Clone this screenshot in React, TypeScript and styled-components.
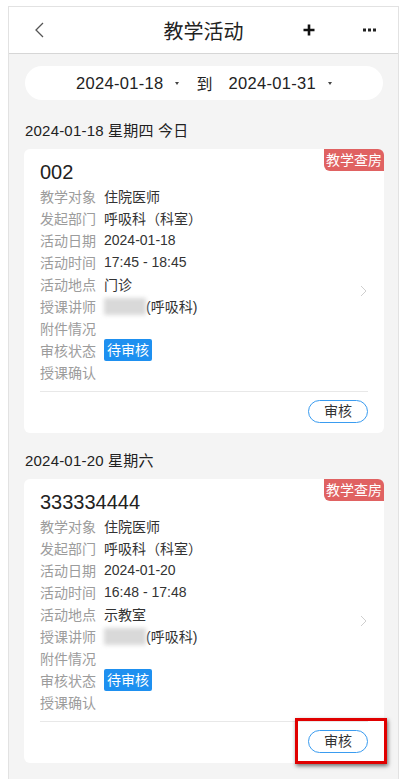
import React from 'react';
import styled, { createGlobalStyle } from 'styled-components';

const GlobalStyle = createGlobalStyle`
  html, body {
    background: #ffffff;
  }
  body {
    margin: 6px 2px 0 8px;
    font-family: "Liberation Sans", "Noto Sans CJK SC", sans-serif;
    color: #333333;
  }
`;

const Frame = styled.div`
  box-sizing: border-box;
  width: 391px;
  min-height: 773px;
  background: #f4f4f4;
  border: 1px solid #e2e2e2;
  border-bottom: none;
  box-shadow: -3px 0 6px rgba(0, 0, 0, 0.06);
`;

const NavBar = styled.div`
  height: 46px;
  background: #ffffff;
  border-bottom: 1px solid #d6d6d6;
  display: grid;
  grid-template-columns: 1fr auto 1fr;
  align-items: center;
`;

const NavTitle = styled.div`
  text-align: center;
  font-size: 20px;
  color: #222222;
  font-family: "Noto Sans CJK SC", sans-serif;
`;

const NavLeft = styled.div`
  display: flex;
  align-items: center;
  padding-left: 25px;
`;

const NavRight = styled.div`
  display: flex;
  align-items: center;
  justify-content: flex-end;
  gap: 48px;
  padding-right: 22px;

  svg {
    flex-shrink: 0;
  }
`;

const RangeWrap = styled.div`
  padding: 12px 15px 0 16px;
`;

const RangePill = styled.div`
  height: 34px;
  background: #ffffff;
  border-radius: 17px;
  display: flex;
  align-items: center;
  justify-content: center;
  font-size: 16.5px;
  color: #222222;
`;

const RangeDate = styled.span`
  display: inline-flex;
  align-items: center;
  gap: 12px;
  letter-spacing: 0.3px;
`;

const Caret = styled.span`
  width: 0;
  height: 0;
  border-left: 2.5px solid transparent;
  border-right: 2.5px solid transparent;
  border-top: 3px solid #444444;
  margin-top: 1px;
`;

const RangeTo = styled.span`
  margin: 0 16px 0 17px;
  font-size: 16px;
  font-family: "Noto Sans CJK SC", sans-serif;
`;

const List = styled.div`
  padding: 0 14px 0 15px;
`;

const DayTitle = styled.div<{ $first?: boolean }>`
  font-size: 15px;
  line-height: 22px;
  color: #222222;
  letter-spacing: 0.2px;
  padding: ${(p) => (p.$first ? '20px' : '17px')} 0 7px 1px;
`;

const Card = styled.div`
  position: relative;
  background: #ffffff;
  border-radius: 6px;
  padding: 10px 16px 10px 16px;
`;

const Tag = styled.span`
  position: absolute;
  top: 0;
  right: 0;
  height: 22px;
  line-height: 22px;
  padding: 0 2px;
  font-size: 14px;
  color: #ffffff;
  background: #e06262;
  border-radius: 0 6px 0 6px;
`;

const CardTitle = styled.div`
  font-size: 20px;
  line-height: 26px;
  color: #222222;
`;

const Row = styled.div`
  display: flex;
  align-items: center;
  height: 22px;
  font-size: 14px;
`;

const Label = styled.span`
  width: 56px;
  margin-right: 8px;
  color: #9c9c9c;
  flex-shrink: 0;
`;

const Value = styled.span`
  color: #333333;
  display: inline-flex;
  align-items: center;
`;

const Blurred = styled.span`
  display: inline-block;
  width: 42px;
  height: 17px;
  background: #d9d9d9;
  filter: blur(2px);
`;

const StatusBadge = styled.span`
  display: inline-block;
  height: 22px;
  line-height: 22px;
  padding: 0 3px;
  border-radius: 2px;
  background: #1e90f0;
  color: #ffffff;
  font-size: 14px;
`;

const Chevron = styled.svg`
  position: absolute;
  right: 17px;
  top: 50%;
  margin-top: -6px;
`;

const Divider = styled.div`
  height: 1px;
  background: #e8e8e8;
  margin-top: 8px;
`;

const Footer = styled.div`
  display: flex;
  justify-content: flex-end;
  padding-top: 8px;
`;

const ActionWrap = styled.div`
  position: relative;
`;

const ActionButton = styled.button`
  box-sizing: border-box;
  width: 60px;
  height: 23px;
  border: 1px solid #3a9cf0;
  border-radius: 12px;
  background: #ffffff;
  color: #333333;
  font-size: 14px;
  font-family: inherit;
  padding: 0;
  line-height: 21px;
`;

const Highlight = styled.span`
  position: absolute;
  left: -13px;
  right: -19px;
  top: -12px;
  bottom: -11px;
  border: 3px solid #e00000;
  box-shadow: 1px 2px 4px rgba(0, 0, 0, 0.55);
  pointer-events: none;
`;

type Activity = {
  day: string;
  title: string;
  date: string;
  time: string;
  place: string;
  highlight?: boolean;
};

const activities: Activity[] = [
  { day: '2024-01-18 星期四 今日', title: '002', date: '2024-01-18', time: '17:45 - 18:45', place: '门诊' },
  {
    day: '2024-01-20 星期六',
    title: '333334444',
    date: '2024-01-20',
    time: '16:48 - 17:48',
    place: '示教室',
    highlight: true,
  },
];

const BackIcon = () => (
  <svg width="12" height="16" viewBox="0 0 12 16">
    <polyline points="9,1 2,8 9,15" fill="none" stroke="#555" strokeWidth="1.3" />
  </svg>
);

const PlusIcon = () => (
  <svg width="12" height="12" viewBox="0 0 12 12">
    <path d="M6 0.5v11M0.5 6h11" stroke="#111" strokeWidth="2.6" />
  </svg>
);

const MoreIcon = () => (
  <svg width="13" height="4" viewBox="0 0 13 4">
    <rect x="0" y="0.5" width="3" height="3" fill="#222" />
    <rect x="5" y="0.5" width="3" height="3" fill="#222" />
    <rect x="10" y="0.5" width="3" height="3" fill="#222" />
  </svg>
);

const ActivityCard = ({ item }: { item: Activity }) => (
  <Card>
    <Tag>教学查房</Tag>
    <CardTitle>{item.title}</CardTitle>
    <Row>
      <Label>教学对象</Label>
      <Value>住院医师</Value>
    </Row>
    <Row>
      <Label>发起部门</Label>
      <Value>呼吸科（科室）</Value>
    </Row>
    <Row>
      <Label>活动日期</Label>
      <Value>{item.date}</Value>
    </Row>
    <Row>
      <Label>活动时间</Label>
      <Value>{item.time}</Value>
    </Row>
    <Row>
      <Label>活动地点</Label>
      <Value>{item.place}</Value>
    </Row>
    <Row>
      <Label>授课讲师</Label>
      <Value>
        <Blurred />
        (呼吸科)
      </Value>
    </Row>
    <Row>
      <Label>附件情况</Label>
    </Row>
    <Row>
      <Label>审核状态</Label>
      <StatusBadge>待审核</StatusBadge>
    </Row>
    <Row>
      <Label>授课确认</Label>
    </Row>
    <Chevron width="7" height="12" viewBox="0 0 7 12">
      <polyline points="1,1 6,6 1,11" fill="none" stroke="#cfcfcf" strokeWidth="1" />
    </Chevron>
    <Divider />
    <Footer>
      <ActionWrap>
        <ActionButton>审核</ActionButton>
        {item.highlight && <Highlight />}
      </ActionWrap>
    </Footer>
  </Card>
);

export default function App() {
  return (
    <>
      <GlobalStyle />
      <Frame>
        <NavBar>
          <NavLeft>
            <BackIcon />
          </NavLeft>
          <NavTitle>教学活动</NavTitle>
          <NavRight>
            <PlusIcon />
            <MoreIcon />
          </NavRight>
        </NavBar>
        <RangeWrap>
          <RangePill>
            <RangeDate>
              2024-01-18
              <Caret />
            </RangeDate>
            <RangeTo>到</RangeTo>
            <RangeDate>
              2024-01-31
              <Caret />
            </RangeDate>
          </RangePill>
        </RangeWrap>
        <List>
          {activities.map((item, i) => (
            <React.Fragment key={item.title}>
              <DayTitle $first={i === 0}>{item.day}</DayTitle>
              <ActivityCard item={item} />
            </React.Fragment>
          ))}
        </List>
      </Frame>
    </>
  );
}
